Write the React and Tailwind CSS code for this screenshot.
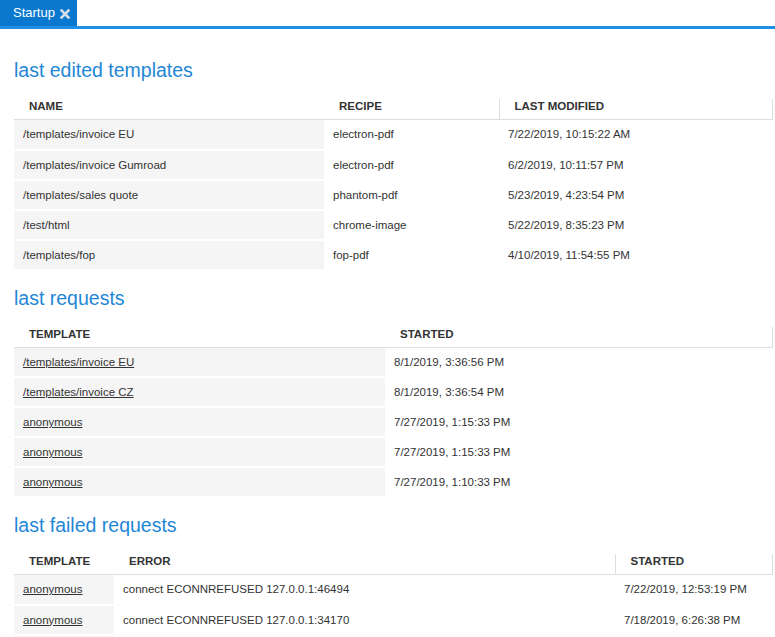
import React from "react";

const font = { fontFamily: '"Liberation Sans", Arial, sans-serif' };

function Table({ cols, headers, rows, linkFirst }) {
  return (
    <table className="w-full table-fixed border-collapse text-[11.5px] text-[#333]">
      <colgroup>
        {cols.map((w, i) => (
          <col key={i} style={w ? { width: w } : undefined} />
        ))}
      </colgroup>
      <thead>
        <tr>
          {headers.map((h, i) => (
            <th
              key={i}
              className={
                "text-left font-bold leading-[14px] pl-[15px] pt-0 pb-[6px] border-b border-[#dddddd] " +
                (i > 0 ? "border-r border-r-[#dddddd]" : "")
              }
            >
              {h}
            </th>
          ))}
        </tr>
      </thead>
      <tbody>
        {rows.map((r, ri) => (
          <tr key={ri}>
            {r.map((c, ci) => (
              <td
                key={ci}
                className={
                  "h-[30px] pl-[9px] border-b-2 border-white leading-[14px] whitespace-nowrap " +
                  (ci === 0 ? "bg-[#f5f5f5]" : "bg-white")
                }
              >
                {ci === 0 && linkFirst && c ? <span className="underline">{c}</span> : c}
              </td>
            ))}
          </tr>
        ))}
      </tbody>
    </table>
  );
}

function Heading({ children, mt }) {
  return (
    <h2 className={"text-[19.5px] leading-[24px] font-normal text-[#1f87d6] mb-[17px] " + mt}>{children}</h2>
  );
}

export default function App() {
  return (
    <div className="w-[775px] h-[637px] overflow-hidden bg-white" style={font}>
      <div className="h-[26px] flex">
        <div className="w-[77px] h-[26px] bg-[#0a78cf] flex items-center pl-[13px] gap-[5px] text-white text-[13px]">
          <span>Startup</span>
          <svg width="10" height="10" viewBox="0 0 10 10" className="mt-[1px]">
            <path d="M1.5 1.5 L8.5 8.5 M8.5 1.5 L1.5 8.5" stroke="#d6dde4" strokeWidth="2.6" strokeLinecap="square" />
          </svg>
        </div>
      </div>
      <div className="h-[3px] bg-[#1f8fe5]" />
      <div className="pl-[14px] pr-[2px]">
        <Heading mt="mt-[29px]">last edited templates</Heading>
        <Table
          cols={[310, 175, null]}
          headers={["NAME", "RECIPE", "LAST MODIFIED"]}
          rows={[
            ["/templates/invoice EU", "electron-pdf", "7/22/2019, 10:15:22 AM"],
            ["/templates/invoice Gumroad", "electron-pdf", "6/2/2019, 10:11:57 PM"],
            ["/templates/sales quote", "phantom-pdf", "5/23/2019, 4:23:54 PM"],
            ["/test/html", "chrome-image", "5/22/2019, 8:35:23 PM"],
            ["/templates/fop", "fop-pdf", "4/10/2019, 11:54:55 PM"],
          ]}
        />
        <Heading mt="mt-[15px]">last requests</Heading>
        <Table
          cols={[371, null]}
          headers={["TEMPLATE", "STARTED"]}
          linkFirst
          rows={[
            ["/templates/invoice EU", "8/1/2019, 3:36:56 PM"],
            ["/templates/invoice CZ", "8/1/2019, 3:36:54 PM"],
            ["anonymous", "7/27/2019, 1:15:33 PM"],
            ["anonymous", "7/27/2019, 1:15:33 PM"],
            ["anonymous", "7/27/2019, 1:10:33 PM"],
          ]}
        />
        <Heading mt="mt-[15px]">last failed requests</Heading>
        <Table
          cols={[100, 501, null]}
          headers={["TEMPLATE", "ERROR", "STARTED"]}
          linkFirst
          rows={[
            ["anonymous", "connect ECONNREFUSED 127.0.0.1:46494", "7/22/2019, 12:53:19 PM"],
            ["anonymous", "connect ECONNREFUSED 127.0.0.1:34170", "7/18/2019, 6:26:38 PM"],
            ["", "", ""],
          ]}
        />
      </div>
    </div>
  );
}
